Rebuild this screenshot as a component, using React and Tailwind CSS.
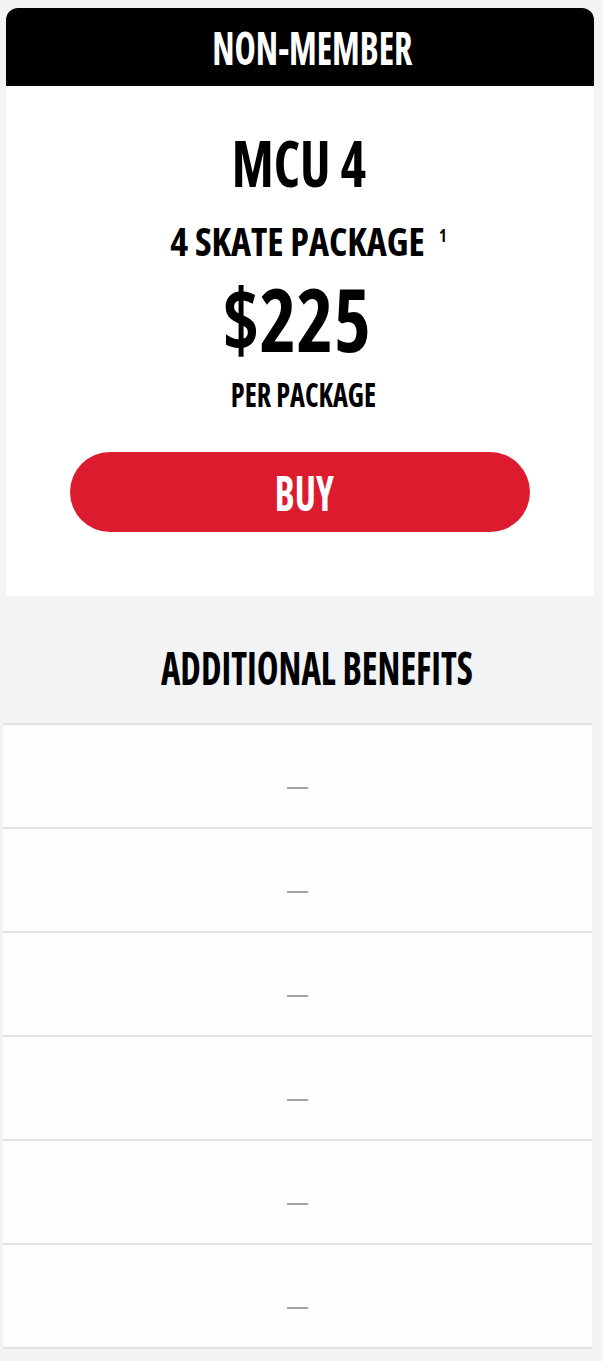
const F = "font-['Open_Sans',sans-serif] font-stretch-condensed font-bold uppercase";

export default function App() {
  const rows = [0, 1, 2, 3, 4, 5];
  return (
    <div className="min-h-[1361px] w-full bg-[#f1f3f5] pt-[8px]">
      <div className="mx-[6px] w-[588px]">
        <div className="flex h-[78px] items-center justify-center rounded-t-[12px] bg-black">
          <div className={`${F} text-[46px] leading-none text-white`}>
            <span className="ml-[24px] inline-block scale-x-[0.78]">Non-Member</span>
          </div>
        </div>
        <div className="flex flex-col items-center bg-white pt-[45px] pb-[64px] text-black">
          <div className={`${F} text-[64px] leading-none`}>
            <span className="mr-[3px] inline-block scale-x-[0.85]">MCU 4</span>
          </div>
          <div className={`${F} mt-[26px] text-[40px] leading-none`}>
            <span className="ml-[16px] inline-block scale-x-[0.95]">
              4 Skate Package
              <sup className="relative top-[6px] ml-[15px] align-top text-[17px] leading-none">1</sup>
            </span>
          </div>
          <div className={`${F} mt-[13px] text-[88px] leading-none`}>
            <span className="mr-[7px] inline-block scale-x-[0.9]">$225</span>
          </div>
          <div className={`${F} mt-[15px] text-[34px] leading-none`}>
            <span className="ml-[7px] inline-block scale-x-[0.83]">Per Package</span>
          </div>
          <button className="mt-[41px] flex h-[80px] w-[460px] items-center justify-center rounded-full bg-[#dc1b2f]">
            <span className={`${F} text-[49px] leading-none text-white`}>
              <span className="ml-[9px] inline-block scale-x-[0.77]">Buy</span>
            </span>
          </button>
        </div>
      </div>
      <div className={`${F} mt-[48px] text-center text-[46px] leading-none text-black`}>
        <span className="ml-[30px] inline-block scale-x-[0.8]">Additional Benefits</span>
      </div>
      <div className="mx-[3px] mt-[33px] w-[589px] border-b-2 border-[#e3e3e3]">
        {rows.map((r) => (
          <div
            key={r}
            className="h-[104px] border-t-2 border-[#e3e3e3] bg-[#fdfdfd] pt-[50px] text-center font-['Liberation_Sans',sans-serif] text-[21px] font-bold leading-[21px] text-[#a3a3a3]"
          >
            —
          </div>
        ))}
      </div>
    </div>
  );
}
